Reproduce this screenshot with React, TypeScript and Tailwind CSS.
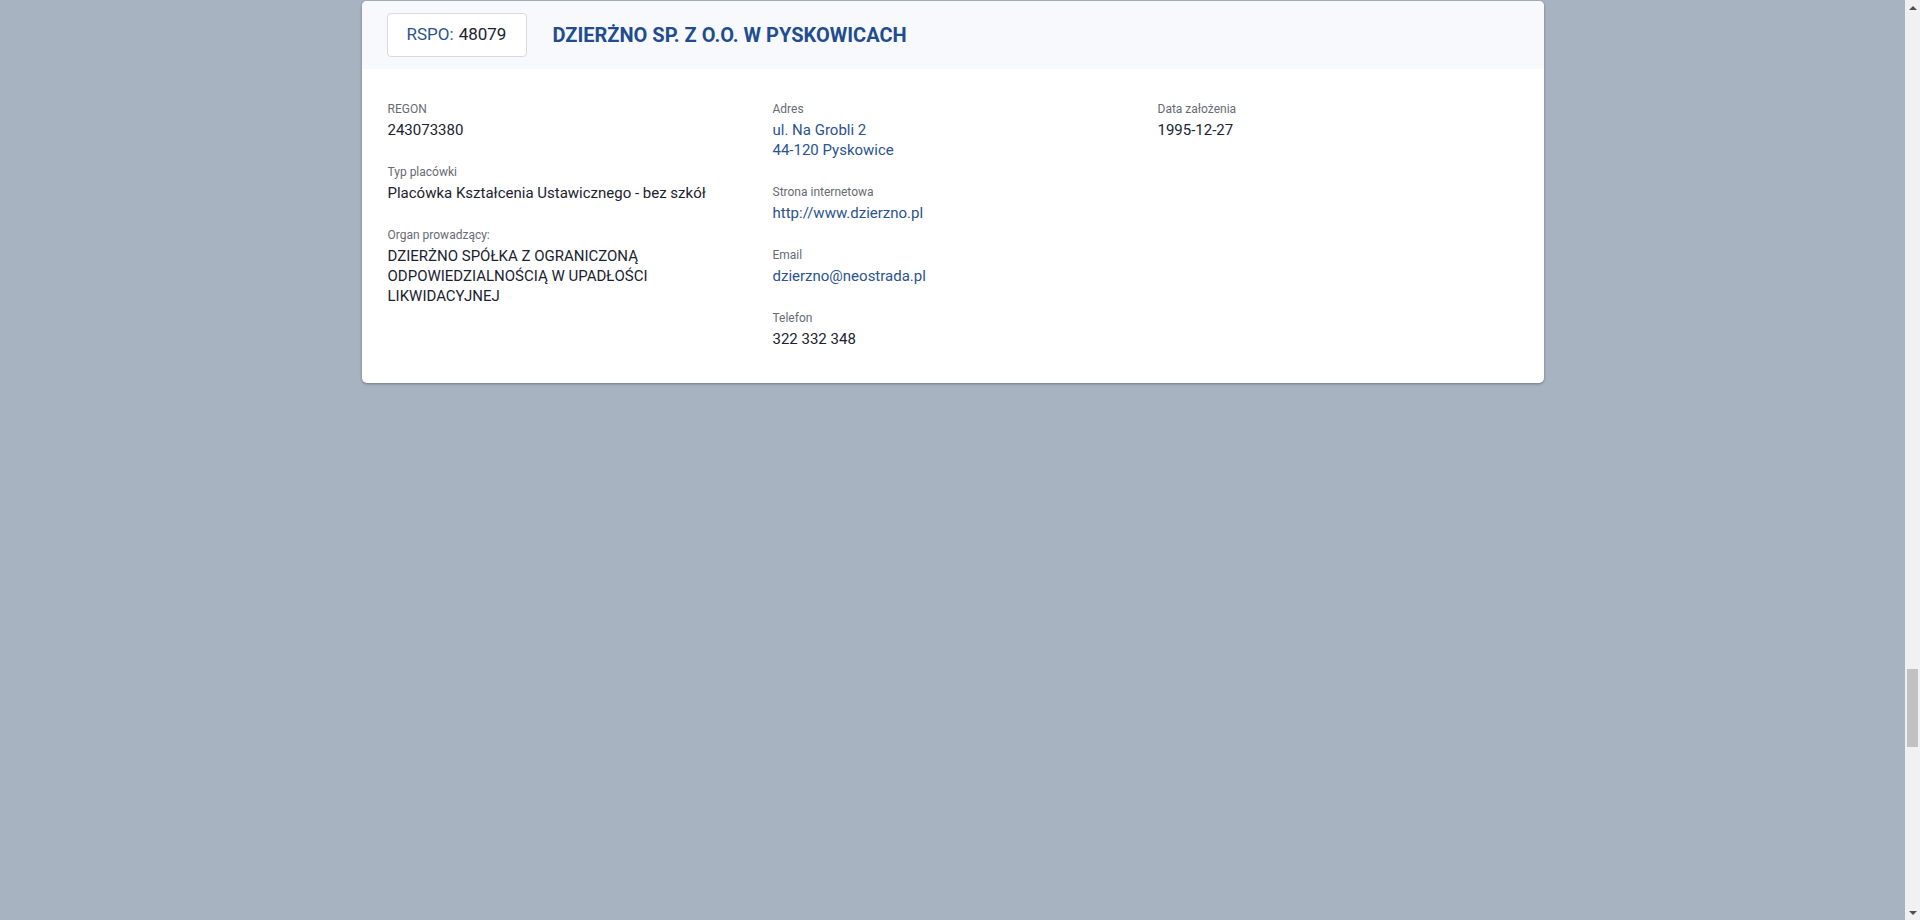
import React from "react";

type Field = {
  label: string;
  lines: string[];
  link?: boolean;
};

const columns: Field[][] = [
  [
    { label: "REGON", lines: ["243073380"] },
    { label: "Typ placówki", lines: ["Placówka Kształcenia Ustawicznego - bez szkół"] },
    {
      label: "Organ prowadzący:",
      lines: ["DZIERŻNO SPÓŁKA Z OGRANICZONĄ ODPOWIEDZIALNOŚCIĄ W UPADŁOŚCI LIKWIDACYJNEJ"],
    },
  ],
  [
    { label: "Adres", lines: ["ul. Na Grobli 2", "44-120 Pyskowice"], link: true },
    { label: "Strona internetowa", lines: ["http://www.dzierzno.pl"], link: true },
    { label: "Email", lines: ["dzierzno@neostrada.pl"], link: true },
    { label: "Telefon", lines: ["322 332 348"] },
  ],
  [{ label: "Data założenia", lines: ["1995-12-27"] }],
];

function InfoField({ field }: { field: Field }) {
  return (
    <div>
      <div className="text-[12px] leading-4 text-[#666b73]">{field.label}</div>
      <div
        className={`mt-[3px] max-w-[345px] text-[15px] leading-5 ${
          field.link ? "text-[#2b5390]" : "text-[#1b2230]"
        }`}
      >
        {field.lines.map((line) => (
          <div key={line}>{line}</div>
        ))}
      </div>
    </div>
  );
}

function Scrollbar() {
  return (
    <div className="flex h-screen w-[15px] shrink-0 flex-col bg-[#f1f1f1]">
      <div className="flex h-[15px] items-center justify-center">
        <div className="h-0 w-0 border-x-[4px] border-b-[4px] border-x-transparent border-b-[#505050]" />
      </div>
      <div className="flex-1 px-[2px] pt-[654px]">
        <div className="h-[78px] w-full bg-[#c1c1c1]" />
      </div>
      <div className="flex h-[15px] items-center justify-center">
        <div className="h-0 w-0 border-x-[4px] border-t-[4px] border-x-transparent border-t-[#505050]" />
      </div>
    </div>
  );
}

export default function App() {
  return (
    <div
      className="flex h-screen w-full overflow-hidden bg-[#a8b3c2]"
      style={{ fontFamily: "Roboto, 'Liberation Sans', sans-serif" }}
    >
      <main className="flex flex-1 justify-center pt-px">
        <div className="h-fit w-[1182px] overflow-hidden rounded-[5px] bg-white shadow-[0_1px_3px_rgba(0,0,0,0.35)]">
          <div className="flex h-[68px] items-center gap-[26px] bg-[#f7f9fc] px-[25px]">
            <div className="flex h-[44px] w-[140px] items-center justify-center rounded border border-[#d6dae0] bg-white text-[17px]">
              <span className="text-[#2b5390]">RSPO:</span>
              <span className="ml-[5px] text-[#1b2230]">48079</span>
            </div>
            <h1 className="text-[20px] font-bold text-[#1f4d8f]">
              DZIERŻNO SP. Z O.O. W PYSKOWICACH
            </h1>
          </div>
          <div className="grid grid-cols-3 gap-x-[25px] px-[26px] pt-8 pb-[34px]">
            {columns.map((col, i) => (
              <div key={i} className="flex flex-col gap-6">
                {col.map((f) => (
                  <InfoField key={f.label} field={f} />
                ))}
              </div>
            ))}
          </div>
        </div>
      </main>
      <Scrollbar />
    </div>
  );
}
